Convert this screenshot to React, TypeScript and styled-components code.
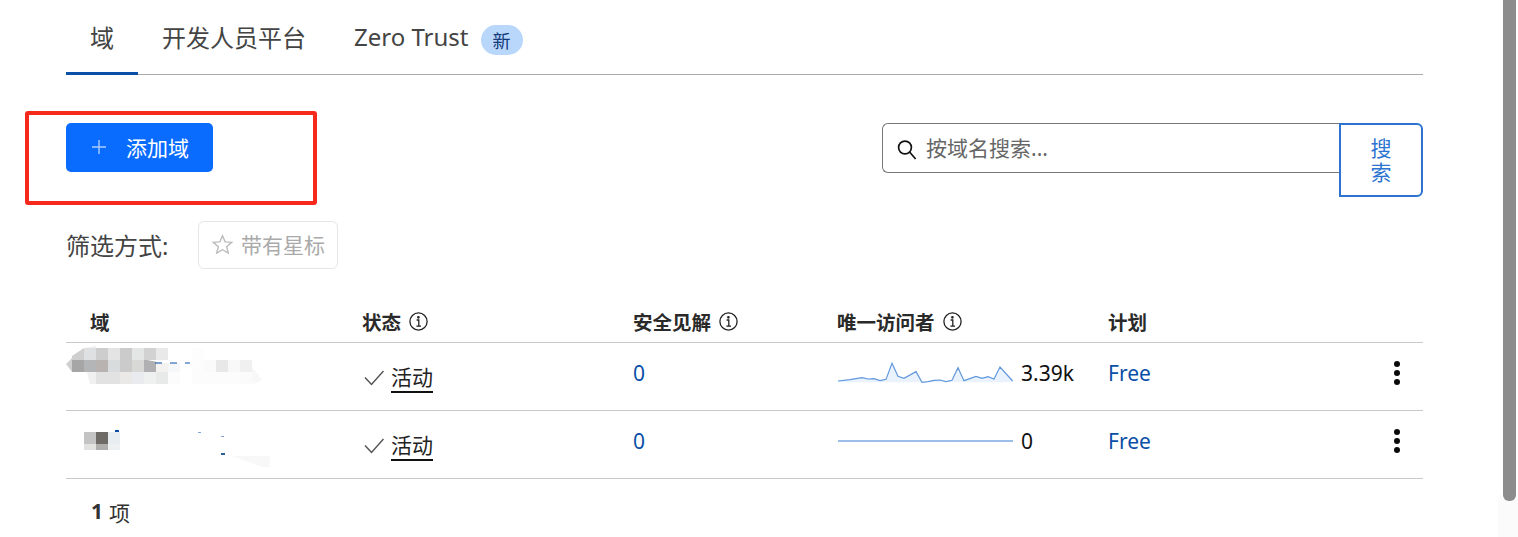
import styled, { createGlobalStyle } from "styled-components";

const GlobalStyle = createGlobalStyle`
    html, body {
        margin: 0;
        padding: 0;
        height: 100%;
        overflow: hidden;
        background: #fff;
    }
    body {
        font-family: "Noto Sans", "Noto Sans CJK SC", sans-serif;
        color: #222;
    }
`

const Page = styled.div`
    position: relative;
    width: 1518px;
    height: 537px;
    overflow: hidden;
    padding: 0 95px 0 66px;
    box-sizing: border-box;
`

const Tabs = styled.nav`
    display: flex;
    align-items: stretch;
    height: 75px;
    box-sizing: border-box;
    border-bottom: 1px solid #aaa;
`

const Tab = styled.div<{ $active?: boolean }>`
    display: flex;
    align-items: center;
    gap: 12px;
    height: 75px;
    box-sizing: border-box;
    padding: 1px 24px 0;
    font-size: 24px;
    color: #444;
    border-bottom: 3px solid ${({ $active }) => ($active ? "#0a4fa8" : "transparent")};
`

const NewBadge = styled.span`
    display: flex;
    align-items: center;
    justify-content: center;
    width: 42px;
    height: 30px;
    margin-top: 6px;
    border-radius: 15px;
    background: #b9d6fb;
    color: #123a7a;
    font-size: 18px;
`

const Toolbar = styled.div`
    display: flex;
    justify-content: space-between;
    align-items: flex-start;
    margin-top: 48px;
    height: 74px;
`

const AddButton = styled.button`
    display: flex;
    align-items: center;
    gap: 19px;
    width: 147px;
    height: 49px;
    padding: 0 0 2px 25px;
    box-sizing: border-box;
    border: none;
    border-radius: 5px;
    background: #0a6cff;
    color: #fff;
    font-family: inherit;
    font-size: 21px;
`

const SearchGroup = styled.div`
    display: flex;
    align-items: flex-start;
`

const SearchBox = styled.div`
    display: flex;
    align-items: center;
    gap: 9px;
    width: 458px;
    height: 50px;
    padding: 0 0 2px 14px;
    box-sizing: border-box;
    border: 1px solid #777;
    border-right: none;
    border-radius: 6px 0 0 6px;
    font-size: 21px;
    color: #666;
    svg {
        margin-top: 6px;
    }
`

const SearchButton = styled.button`
    width: 84px;
    height: 74px;
    margin-left: -1px;
    padding: 0 20px;
    box-sizing: border-box;
    border: 2px solid #2c74d0;
    border-radius: 0 6px 6px 0;
    background: #fff;
    color: #2c74d0;
    font-family: inherit;
    font-size: 21px;
    line-height: 24px;
    word-break: break-all;
`

const FilterRow = styled.div`
    display: flex;
    align-items: center;
    margin-top: 24px;
    height: 48px;
    font-size: 21px;
    color: #444;
`

const FilterLabel = styled.span`
    width: 132px;
    padding-bottom: 2px;
    font-size: 24px;
`

const StarredButton = styled.div`
    display: flex;
    align-items: center;
    gap: 8px;
    width: 140px;
    height: 48px;
    padding: 0 0 2px 13px;
    box-sizing: border-box;
    border: 1px solid #e6e6e6;
    border-radius: 6px;
    color: #aaa;
`

const TableRow = styled.div<{ $head?: boolean }>`
    display: grid;
    grid-template-columns: 272px 271px 204px 271px 1fr;
    align-items: center;
    height: ${({ $head }) => ($head ? "43px" : "68px")};
    box-sizing: border-box;
    border-bottom: 1px solid #c8c8c8;
    margin-top: ${({ $head }) => ($head ? "31px" : "0")};
`

const HeadCell = styled.div`
    display: flex;
    align-items: center;
    gap: 8px;
    padding-left: 24px;
    font-size: 19.5px;
    font-weight: 700;
    color: #2a2a2a;
`

const Cell = styled.div`
    display: flex;
    align-items: center;
    padding: 0 0 8px 24px;
    font-size: 21px;
    color: #111;
`

const DomainCell = styled.div`
    height: 67px;
    svg {
        display: block;
    }
`

const StatusCell = styled(Cell)`
    gap: 7px;
    padding: 2px 0 0 26px;
    color: #222;
`

const StatusText = styled.span`
    border-bottom: 2px solid #111;
    line-height: 28px;
`

const LinkText = styled.span`
    color: #0a4fa8;
`

const PlanCell = styled(Cell)`
    justify-content: space-between;
    padding-right: 22px;
`

const Spark = styled.svg`
    display: block;
    flex: none;
    margin-left: 1px;
`

const VisitorCell = styled(Cell)`
    gap: 7px;
`

const Footer = styled.div`
    display: flex;
    gap: 6px;
    margin-top: 18px;
    padding-left: 25px;
    font-size: 21px;
    color: #333;
    b {
        font-weight: 700;
    }
`

const RedBox = styled.div`
    position: absolute;
    left: 25px;
    top: 111px;
    width: 292px;
    height: 94px;
    box-sizing: border-box;
    border: 4px solid #f52a1c;
    border-radius: 3px;
`

const ScrollTrack = styled.div`
    position: absolute;
    right: 0;
    top: 0;
    bottom: 0;
    width: 20px;
    background: linear-gradient(to bottom, #fff 0, #fff 495px, #fbfbfb 495px);
`

const ScrollThumb = styled.div`
    position: absolute;
    left: 5px;
    top: -10px;
    width: 13px;
    height: 511px;
    border-radius: 0 0 6px 6px;
    background: #8c8c8c;
`

const InfoIcon = () => (
    <svg width="19" height="19" viewBox="0 0 19 19" fill="none" stroke="#222" strokeWidth="1.3">
        <circle cx="9.5" cy="9.5" r="8.6" />
        <path d="M7.6 8h2.2v6M7.4 14.2h4.6" />
        <circle cx="9.4" cy="5.3" r="0.7" fill="#222" />
    </svg>
)

const CheckIcon = () => (
    <svg width="20" height="16" viewBox="0 0 20 16" fill="none" stroke="#555" strokeWidth="1.5">
        <path d="M1 7.5l6.5 7L19.5 1" />
    </svg>
)

const StatusBadge = () => (
    <StatusCell>
        <CheckIcon />
        <StatusText>活动</StatusText>
    </StatusCell>
)

const KebabIcon = () => (
    <svg width="8" height="26" viewBox="0 0 8 26" fill="#0a0a0a">
        <circle cx="4" cy="4" r="3" />
        <circle cx="4" cy="13" r="3" />
        <circle cx="4" cy="22" r="3" />
    </svg>
)

// mosaic over the domain names, coordinates are page pixels
type Tile = [number, number, string];

const mosaicOne: Tile[] = [
    [84, 348, "#dfe0e1"], [96, 348, "#cdcdcd"], [108, 348, "#e4e4e4"], [120, 348, "#cbcbcb"],
    [132, 348, "#e4e6e6"], [144, 348, "#d2d2d2"], [156, 348, "#e9e9ea"], [192, 348, "#fdfdfd"],
    [72, 360, "#a6a6a6"], [84, 360, "#b3b5b6"], [96, 360, "#b8b2b0"], [108, 360, "#d8dcdd"],
    [120, 360, "#cbcbcb"], [132, 360, "#d8d8d6"], [144, 360, "#b0b0b2"], [156, 360, "#f4f2f0"],
    [168, 360, "#f6f7f8"], [192, 360, "#fcfcfc"], [204, 360, "#fafafa"], [216, 360, "#e8e8e8"],
    [228, 360, "#f8f8f8"], [240, 360, "#f0f0f0"],
    [96, 372, "#e2e2e2"], [108, 372, "#e2e2e2"], [120, 372, "#ebe9e7"], [132, 372, "#e9ebee"],
    [144, 372, "#eff0f0"], [156, 372, "#e8e9e9"], [168, 372, "#fcfcfc"], [192, 372, "#fcfcfc"],
    [204, 372, "#fcfcfc"], [216, 372, "#fcfcfc"], [228, 372, "#fcfcfc"], [240, 372, "#fbfbfb"],
];

const mosaicTwo: Tile[] = [
    [84, 432, "#c4c4c4"], [96, 432, "#6e6b66"], [108, 432, "#e8edf2"],
];

const mosaicTwoLow: Tile[] = [
    [84, 444, "#e2e2e0"], [96, 444, "#b0aeac"], [108, 444, "#eef1f4"],
];

const MosaicOne = () => (
    <svg width="272" height="67" viewBox="66 343 272 67">
        <path d="M66 364l6-6v-2l12-8v12H72v12z" fill="#cfcfcf" />
        <path d="M87 372h9v12h-6z" fill="#f0f0f0" />
        <path d="M84 348l12-2v2z" fill="#eeeeee" />
        <path d="M252 366l10 14-8 4-12-12z" fill="#f8f8f8" />
        {mosaicOne.map(([x, y, fill]) => (
            <rect key={`${x}-${y}`} x={x} y={y} width="12" height="12" fill={fill} />
        ))}
        <path d="M147 360h46v3h-30z" fill="#fff" />
        <path d="M155 363h7M170 363h7M185 363h5" stroke="#0a4fa8" strokeWidth="1" />
    </svg>
)

const MosaicTwo = () => (
    <svg width="272" height="67" viewBox="66 411 272 67">
        {mosaicTwo.map(([x, y, fill]) => (
            <rect key={x} x={x} y={y} width="12" height="12" fill={fill} />
        ))}
        {mosaicTwoLow.map(([x, y, fill]) => (
            <rect key={x} x={x} y={y} width="12" height="6" fill={fill} />
        ))}
        <rect x="115" y="430" width="4" height="2" fill="#0a4fa8" />
        <rect x="198" y="432" width="3" height="1" fill="#7fa6d6" />
        <rect x="221" y="436" width="3" height="1" fill="#7fa6d6" />
        <rect x="221" y="453" width="4" height="2" fill="#2c5f9e" />
        <path d="M232 456h38v11h-8z" fill="#f8f8f8" />
    </svg>
)

const sparkPoints =
    "54,246 90,242 126,236 144,240 162,239 180,245 198,241 216,193 234,232 252,238 288,218 306,250 324,248 342,244 360,243 378,248 396,244 414,206 432,245 468,232 486,238 504,233 522,240 540,204 578,246";

const VisitorSpark = () => (
    <Spark width="176" height="24" viewBox="54 186 528 72">
        <polygon points={`${sparkPoints} 578,250 54,250`} fill="#eaf3fd" />
        <polyline points={sparkPoints} fill="none" stroke="#5f97dc" strokeWidth="3.5" />
    </Spark>
)

const FlatSpark = () => (
    <Spark width="176" height="4" viewBox="0 0 176 4">
        <path d="M0 2h175" stroke="#7aa7e0" strokeWidth="1.5" />
    </Spark>
)

const App = () => {
    return (
        <Page>
            <GlobalStyle />
            <Tabs>
                <Tab $active>域</Tab>
                <Tab>开发人员平台</Tab>
                <Tab>
                    Zero Trust
                    <NewBadge>新</NewBadge>
                </Tab>
            </Tabs>
            <Toolbar>
                <AddButton>
                    <svg width="16" height="16" viewBox="0 0 16 16" stroke="#a9cdff" strokeWidth="1.4">
                        <path d="M8 1v14M1 8h14" />
                    </svg>
                    添加域
                </AddButton>
                <SearchGroup>
                    <SearchBox>
                        <svg width="20" height="22" viewBox="0 0 20 22" fill="none" stroke="#111" strokeWidth="1.7">
                            <circle cx="8" cy="8.5" r="6.4" />
                            <path d="M12.6 13l6 7" />
                        </svg>
                        按域名搜索...
                    </SearchBox>
                    <SearchButton>搜索</SearchButton>
                </SearchGroup>
            </Toolbar>
            <FilterRow>
                <FilterLabel>筛选方式:</FilterLabel>
                <StarredButton>
                    <svg width="21" height="21" viewBox="0 0 24 24" fill="none" stroke="#bbb" strokeWidth="1.6">
                        <path d="M12 2l3 7 7.5.6-5.7 4.9 1.8 7.4L12 18l-6.6 3.9 1.8-7.4L1.500 9.600 9 9z" />
                    </svg>
                    带有星标
                </StarredButton>
            </FilterRow>
            <TableRow $head>
                <HeadCell>域</HeadCell>
                <HeadCell>状态 <InfoIcon /></HeadCell>
                <HeadCell>安全见解 <InfoIcon /></HeadCell>
                <HeadCell>唯一访问者 <InfoIcon /></HeadCell>
                <HeadCell>计划</HeadCell>
            </TableRow>
            <TableRow>
                <DomainCell><MosaicOne /></DomainCell>
                <StatusBadge />
                <Cell><LinkText>0</LinkText></Cell>
                <VisitorCell><VisitorSpark />3.39k</VisitorCell>
                <PlanCell><LinkText>Free</LinkText><KebabIcon /></PlanCell>
            </TableRow>
            <TableRow>
                <DomainCell><MosaicTwo /></DomainCell>
                <StatusBadge />
                <Cell><LinkText>0</LinkText></Cell>
                <VisitorCell><FlatSpark />0</VisitorCell>
                <PlanCell><LinkText>Free</LinkText><KebabIcon /></PlanCell>
            </TableRow>
            <Footer><b>1</b> 项</Footer>
            <RedBox />
            <ScrollTrack>
                <ScrollThumb />
            </ScrollTrack>
        </Page>
    )
}

export default App;
